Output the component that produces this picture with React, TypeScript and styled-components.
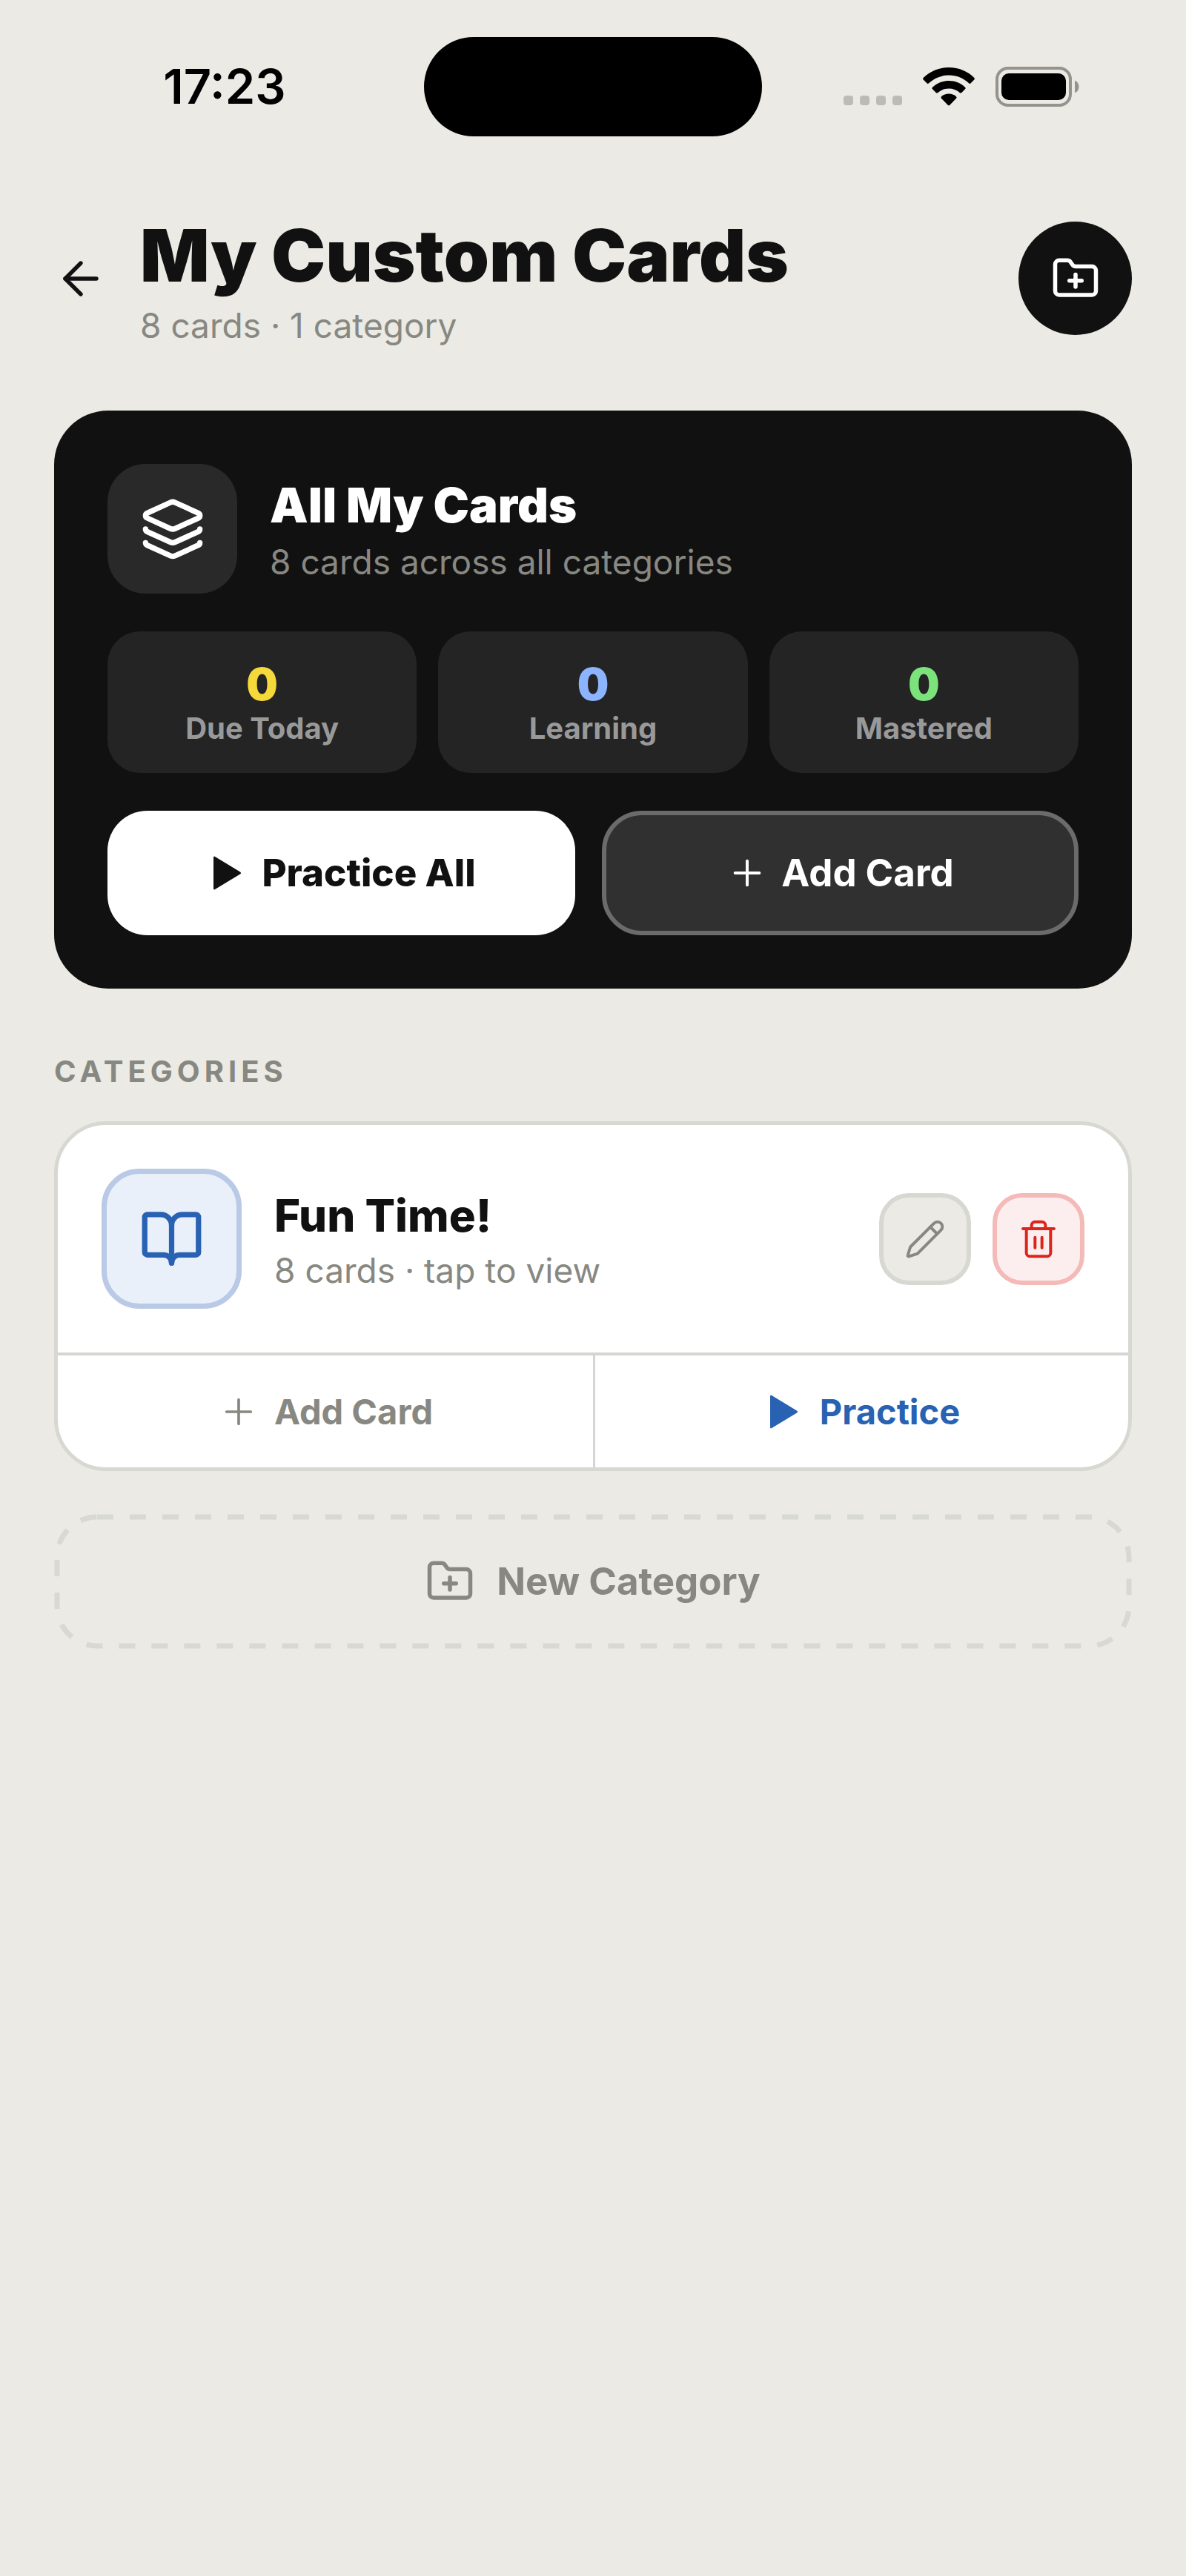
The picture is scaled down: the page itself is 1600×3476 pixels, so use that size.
import { ArrowLeft, BookOpen, FolderPlus, Layers, Pencil, Plus, Trash2 } from "lucide-react"
import styled, { createGlobalStyle } from "styled-components"

const stats = [
  { label: "Due Today", value: 0, color: "#f5d93b" },
  { label: "Learning", value: 0, color: "#8db4fe" },
  { label: "Mastered", value: 0, color: "#7ce37c" },
]

const categories = [{ id: "fun-time", name: "Fun Time!", count: 8 }]

export default function App() {
  return (
    <Screen>
      <GlobalStyle />
      <StatusBar />
      <Header>
        <BackButton aria-label="Back">
          <ArrowLeft size={72} strokeWidth={1.8} />
        </BackButton>
        <HeaderText>
          <PageTitle>My Custom Cards</PageTitle>
          <Subtitle>8 cards · 1 category</Subtitle>
        </HeaderText>
        <RoundButton aria-label="New category">
          <FolderPlus size={66} />
        </RoundButton>
      </Header>

      <Main>
        <Summary />
        <SectionLabel>CATEGORIES</SectionLabel>
        {categories.map((category) => (
          <Category key={category.id} name={category.name} count={category.count} />
        ))}
        <NewCategory>
          <DashedOutline aria-hidden="true">
            <rect x="4" y="4" rx="54" />
          </DashedOutline>
          <FolderPlus size={66} />
          New Category
        </NewCategory>
      </Main>
    </Screen>
  )
}

function StatusBar() {
  return (
    <StatusBarCon>
      <Clock>17:23</Clock>
      <Island />
      <StatusIcons>
        <SignalDots>
          {[0, 1, 2, 3].map((val) => (
            <i key={val} />
          ))}
        </SignalDots>
        <WifiIcon />
        <BatteryIcon />
      </StatusIcons>
    </StatusBarCon>
  )
}

function WifiIcon() {
  return (
    <svg width="70" height="52" viewBox="0 0 70 52" fill="#000">
      <path d="M35 0C48.500 0 60.500 5.200 69.300 14Q70.500 15.300 69.300 16.600L64.600 21.300Q63.300 22.500 62 21.300C54.800 14.500 45.500 10.600 35 10.600S15.200 14.500 8 21.300Q6.700 22.500 5.400 21.300L.7 16.600Q-.5 15.300.7 14C9.500 5.200 21.500 0 35 0Z" />
      <path d="M35 18C43.600 18 51.300 21.300 57 26.700Q58.300 28 57 29.300L52.300 34Q51 35.200 49.700 34C45.700 30.500 40.700 28.600 35 28.600S24.300 30.500 20.300 34Q19 35.200 17.700 34L13 29.300Q11.700 28 13 26.700C18.700 21.300 26.400 18 35 18Z" />
      <path d="M35 35.600C38.800 35.600 42.200 36.900 44.900 39.200Q46.200 40.400 45 41.700L36.300 50.700Q35 52 33.700 50.700L25 41.700Q23.800 40.400 25.100 39.200C27.800 36.900 31.200 35.600 35 35.600Z" />
    </svg>
  )
}

function BatteryIcon() {
  return (
    <svg width="114" height="54" viewBox="0 0 114 54">
      <rect x="2" y="2" width="99" height="50" rx="15" fill="none" stroke="#94938d" strokeWidth="4" />
      <rect x="8" y="9" width="87" height="36" rx="10" fill="#000" />
      <path d="M107 18.500C110.500 20 112.500 23 112.500 27S110.500 34 107 35.500Z" fill="#94938d" />
    </svg>
  )
}

function PlayIcon() {
  return (
    <svg width="56" height="56" viewBox="0 0 56 56" fill="currentColor">
      <path d="M9 7.500Q9 4.500 11.600 6.200L45 26.400Q47 28 45 29.600L11.600 49.800Q9 51.500 9 48.500Z" />
    </svg>
  )
}

function Summary() {
  return (
    <SummaryCard>
      <SummaryTop>
        <LayersBox>
          <Layers size={88} />
        </LayersBox>
        <TextBlock>
          <SummaryTitle>All My Cards</SummaryTitle>
          <Subtitle>8 cards across all categories</Subtitle>
        </TextBlock>
      </SummaryTop>
      <StatGrid>
        {stats.map((stat) => (
          <Stat key={stat.label}>
            <StatValue $color={stat.color}>{stat.value}</StatValue>
            <StatLabel>{stat.label}</StatLabel>
          </Stat>
        ))}
      </StatGrid>
      <SummaryActions>
        <PrimaryButton>
          <PlayIcon />
          Practice All
        </PrimaryButton>
        <SecondaryButton>
          <Plus size={56} strokeWidth={1.7} />
          Add Card
        </SecondaryButton>
      </SummaryActions>
    </SummaryCard>
  )
}

function Category({ name, count }: { name: string; count: number }) {
  return (
    <CategoryCard>
      <CategoryTop>
        <BookBox>
          <BookOpen size={87} />
        </BookBox>
        <TextBlock>
          <CategoryName>{name}</CategoryName>
          <Subtitle>{count} cards · tap to view</Subtitle>
        </TextBlock>
        <IconButtons>
          <IconButton aria-label="Edit category">
            <Pencil size={56} strokeWidth={1.7} />
          </IconButton>
          <IconButton aria-label="Delete category" $danger>
            <Trash2 size={56} strokeWidth={1.7} />
          </IconButton>
        </IconButtons>
      </CategoryTop>
      <CategoryActions>
        <CategoryAction>
          <Plus size={56} strokeWidth={1.6} />
          Add Card
        </CategoryAction>
        <CategoryAction $accent>
          <PlayIcon />
          Practice
        </CategoryAction>
      </CategoryActions>
    </CategoryCard>
  )
}

const GlobalStyle = createGlobalStyle`
  * {
    box-sizing: border-box;
  }

  body {
    margin: 0;
    background-color: #ebeae4;
    font-family: Inter, "Liberation Sans", sans-serif;
    color: #111111;
  }

  h1, h2, h3, p {
    margin: 0;
  }

  button {
    font-family: inherit;
    color: inherit;
    border: none;
    padding: 0;
    background: none;
    cursor: pointer;
  }

  svg {
    display: block;
    flex-shrink: 0;
  }
`

const Screen = styled.div`
  min-height: 100vh;
  background-color: #ebeae4;
`

const StatusBarCon = styled.div`
  display: grid;
  grid-template-columns: 1fr 456px 1fr;
  align-items: center;
  padding: 50px 34px 0;
`

const Clock = styled.div`
  text-align: center;
  font-size: 65px;
  line-height: 76px;
  font-weight: 600;
  color: #000000;
`

const Island = styled.div`
  height: 134px;
  border-radius: 67px;
  background-color: #000000;
`

const StatusIcons = styled.div`
  display: flex;
  justify-content: center;
  align-items: center;
  gap: 28px;
`

const SignalDots = styled.div`
  display: flex;
  align-self: flex-end;
  gap: 9px;
  padding-bottom: 2px;

  i {
    width: 13px;
    height: 13px;
    border-radius: 4px;
    background-color: #bcbbb6;
  }
`

const Header = styled.header`
  display: flex;
  align-items: center;
  padding: 100px 73px 0;
`

const BackButton = styled.button`
  margin-right: 44px;
`

const HeaderText = styled.div`
  flex: 1;
  display: flex;
  flex-direction: column;
  gap: 5px;
`

const PageTitle = styled.h1`
  font-size: 98px;
  line-height: 122px;
  font-weight: 900;
`

const Subtitle = styled.p`
  font-size: 46px;
  line-height: 56px;
  color: #888882;
`

const RoundButton = styled.button`
  width: 153px;
  height: 153px;
  border-radius: 50%;
  display: flex;
  align-items: center;
  justify-content: center;
  background-color: #111111;
  color: #ffffff;
`

const Main = styled.main`
  padding: 87px 73px 73px;
`

const SummaryCard = styled.section`
  padding: 72px;
  border-radius: 73px;
  background-color: #111111;
  color: #ffffff;
`

const SummaryTop = styled.div`
  display: flex;
  align-items: center;
  gap: 44px;
`

const LayersBox = styled.div`
  width: 175px;
  height: 175px;
  border-radius: 51px;
  display: flex;
  align-items: center;
  justify-content: center;
  background-color: #292929;
`

const TextBlock = styled.div`
  flex: 1;
  display: flex;
  flex-direction: column;
  gap: 8px;
`

const SummaryTitle = styled.h2`
  font-size: 65px;
  line-height: 80px;
  font-weight: 900;
`

const StatGrid = styled.div`
  display: grid;
  grid-template-columns: repeat(3, 1fr);
  gap: 29px;
  margin: 51px 0;
`

const Stat = styled.div`
  padding: 35px 0 36px;
  border-radius: 44px;
  text-align: center;
  background-color: #242424;
`

const StatValue = styled.div<{ $color: string }>`
  font-size: 60px;
  line-height: 72px;
  font-weight: 900;
  color: ${({ $color }) => $color};
`

const StatLabel = styled.div`
  font-size: 40px;
  line-height: 48px;
  font-weight: 700;
  color: #999999;
`

const SummaryActions = styled.div`
  display: flex;
  gap: 36px;
`

const PrimaryButton = styled.button`
  flex: 1 1 0;
  height: 168px;
  border-radius: 54px;
  display: flex;
  align-items: center;
  justify-content: center;
  gap: 18px;
  font-size: 51px;
  line-height: 60px;
  font-weight: 800;
  color: #111111;
  background-color: #ffffff;
`

const SecondaryButton = styled(PrimaryButton)`
  border: 6px solid #6b6b6b;
  font-weight: 700;
  color: #ffffff;
  background-color: #303030;
`

const SectionLabel = styled.h2`
  margin: 88px 0 43px;
  font-size: 40px;
  line-height: 48px;
  font-weight: 700;
  letter-spacing: 6px;
  color: #888882;
`

const CategoryCard = styled.section`
  border: 5px solid #d8d8d2;
  border-radius: 70px;
  overflow: hidden;
  background-color: #ffffff;
`

const CategoryTop = styled.div`
  display: flex;
  align-items: center;
  gap: 44px;
  padding: 59px;
`

const BookBox = styled.div`
  width: 189px;
  height: 189px;
  border: 7px solid #b9c9e6;
  border-radius: 51px;
  display: flex;
  align-items: center;
  justify-content: center;
  color: #2962b3;
  background-color: #eaf0f9;
`

const CategoryName = styled.h3`
  font-size: 60px;
  line-height: 76px;
  font-weight: 800;
`

const IconButtons = styled.div`
  display: flex;
  gap: 29px;
`

const IconButton = styled.button<{ $danger?: boolean }>`
  width: 124px;
  height: 124px;
  border: 6px solid ${({ $danger }) => ($danger ? "#f4bab8" : "#d8d8d2")};
  border-radius: 40px;
  display: flex;
  align-items: center;
  justify-content: center;
  color: ${({ $danger }) => ($danger ? "#dc241b" : "#888882")};
  background-color: ${({ $danger }) => ($danger ? "#fceeee" : "#ebeae4")};
`

const CategoryActions = styled.div`
  display: grid;
  grid-template-columns: 1fr 1fr;
  border-top: 4px solid #d5d5d1;
`

const CategoryAction = styled.button<{ $accent?: boolean }>`
  height: 151px;
  display: flex;
  align-items: center;
  justify-content: center;
  gap: 20px;
  font-size: 47px;
  line-height: 56px;
  font-weight: 700;
  color: ${({ $accent }) => ($accent ? "#2962b3" : "#888882")};

  & + & {
    border-left: 3px solid #d5d5d1;
  }
`

const NewCategory = styled.button`
  position: relative;
  width: 100%;
  height: 182px;
  margin-top: 58px;
  display: flex;
  align-items: center;
  justify-content: center;
  gap: 30px;
  font-size: 51px;
  line-height: 60px;
  font-weight: 700;
  color: #888882;
`

const DashedOutline = styled.svg`
  position: absolute;
  inset: 0;
  width: 100%;
  height: 100%;

  rect {
    width: calc(100% - 8px);
    height: calc(100% - 8px);
    fill: none;
    stroke: #d9d9d3;
    stroke-width: 7px;
    stroke-dasharray: 22px;
  }
`
